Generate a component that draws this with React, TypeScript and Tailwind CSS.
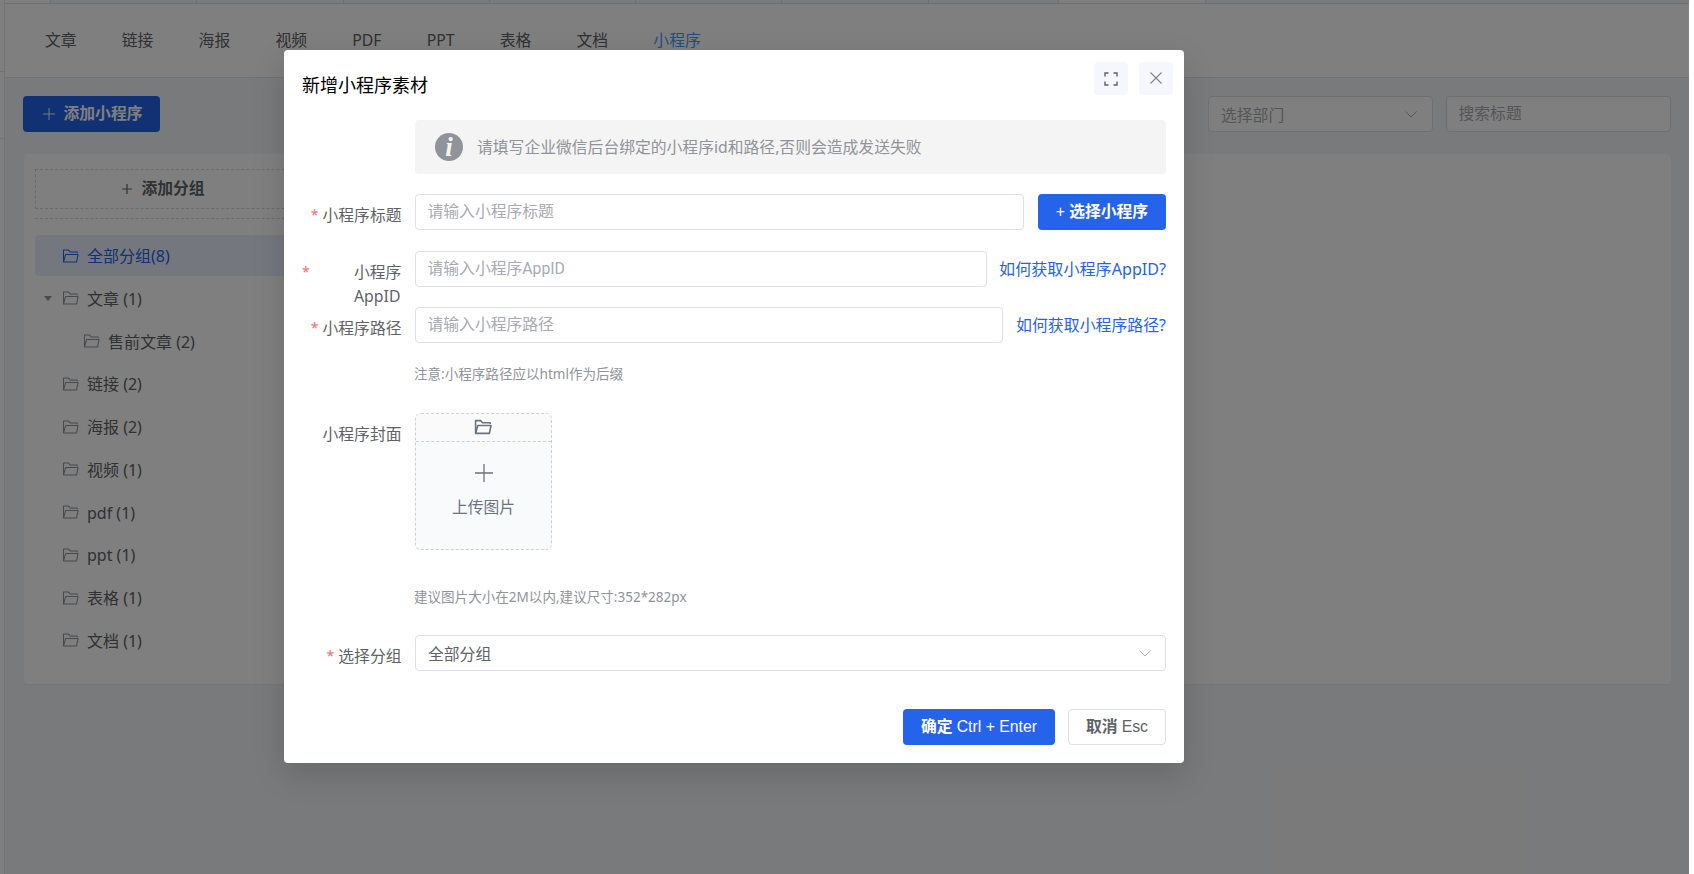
import type { ReactNode } from 'react'

const tabs = ['文章', '链接', '海报', '视频', 'PDF', 'PPT', '表格', '文档', '小程序']

const groups = [
  { name: '文章 (1)', expandable: true },
  { name: '售前文章 (2)', child: true },
  { name: '链接 (2)' },
  { name: '海报 (2)' },
  { name: '视频 (1)' },
  { name: 'pdf (1)' },
  { name: 'ppt (1)' },
  { name: '表格 (1)' },
  { name: '文档 (1)' },
]

const windowTabs = [
  { id: 1, cls: 'w-[46px] bg-white' },
  { id: 2, cls: 'w-[146px]' },
  { id: 3, cls: 'w-[147px]' },
  { id: 4, cls: 'w-[146px]' },
  { id: 5, cls: 'w-[146px]' },
  { id: 6, cls: 'w-[146px]' },
  { id: 7, cls: 'w-[147px]' },
  { id: 8, cls: 'w-[130px]' },
  { id: 9, cls: 'w-[147px] bg-white' },
]

function FolderIcon({ className, thick }: { className?: string; thick?: boolean }) {
  return (
    <svg viewBox="0 0 18 16" className={className} fill="none" stroke="currentColor" strokeWidth={thick ? 1.6 : 1.1} strokeLinejoin="round">
      <path d="M1.6 14.4V1.6h5l2 2.1h7.6v1.4" />
      <path d="M1.6 14.4l2.2-7.9h13.2l-1.6 7.9z" />
    </svg>
  )
}

function PlusIcon({ className, width = 1 }: { className?: string; width?: number }) {
  return (
    <svg viewBox="0 0 18 18" className={className} fill="none" stroke="currentColor" strokeWidth={width}>
      <path d="M9 0v18M0 9h18" />
    </svg>
  )
}

function Chevron({ className }: { className?: string }) {
  return (
    <svg viewBox="0 0 12 7" className={className} fill="none" stroke="currentColor" strokeWidth="1">
      <path d="M.4.5L6 6l5.600-5.500" />
    </svg>
  )
}

function Label({ children, required }: { children: ReactNode; required?: boolean }) {
  return (
    <div className="flex w-[113px] shrink-0 justify-end pr-[13.500px] pt-[9px] leading-6 text-[#606266]">
      {required && <span className="mr-1 text-[14px] text-[#f56c6c]">*</span>}
      <span className="whitespace-nowrap">{children}</span>
    </div>
  )
}

function TextInput({ placeholder, className }: { placeholder: string; className: string }) {
  return (
    <input
      placeholder={placeholder}
      className={`h-9 rounded border border-[#dcdfe6] bg-white pr-3 pb-px pl-[11.500px] font-[Roboto,'Noto_Sans_CJK_SC',sans-serif] outline-none placeholder:text-[#a8abb2] ${className}`}
    />
  )
}

function AddDialog() {
  return (
    <div className="h-[713px] w-[900px] rounded-[4px] bg-white px-[18px] shadow-[0_12px_32px_0_rgba(0,0,0,0.15)]">
      <div className="flex h-[70px] justify-between pt-3">
        <h2 className="pt-[9px] text-[18px] leading-7 text-black">新增小程序素材</h2>
        <div className="-mr-[7px] flex gap-[11px]">
          <button className="flex h-[33px] w-[34px] items-center justify-center rounded bg-[#f5f7fc] pr-px text-[#606266]">
            <svg viewBox="0 0 14 14" className="size-[14px]" fill="none" stroke="currentColor" strokeWidth="1.4">
              <path d="M1 4.500V1h3.500M9.500 1H13v3.500M13 9.500V13H9.500M4.500 13H1V9.500" />
            </svg>
          </button>
          <button className="flex h-[33px] w-[34px] items-center justify-center rounded bg-[#f5f7fc] pb-px text-[#808389]">
            <svg viewBox="0 0 12 12" className="size-3" fill="none" stroke="currentColor" strokeWidth="1.1">
              <path d="M.5.5l11 11M11.500.5l-11 11" />
            </svg>
          </button>
        </div>
      </div>

      <div className="ml-[113px] flex h-[54px] items-center rounded bg-[#f4f4f4] pl-5 text-[#909399]">
        <span className="mr-[14px] flex size-7 items-center justify-center rounded-full bg-[#909399] font-['Liberation_Serif',serif] text-[27px] leading-none font-bold text-[#f4f4f4] italic">i</span>
        <span className="pt-0.5">请填写企业微信后台绑定的小程序id和路径,否则会造成发送失败</span>
      </div>

      <div className="mt-5 flex">
        <Label required>小程序标题</Label>
        <TextInput placeholder="请输入小程序标题" className="w-[609px]" />
        <button className="ml-[14px] h-9 w-32 rounded bg-[#2563eb] pb-px font-bold text-white">
          <span className="font-['Liberation_Sans',sans-serif] font-normal">+</span> 选择小程序
        </button>
      </div>

      <div className="mt-[21px] flex h-9">
        <div className="flex w-[113px] shrink-0 justify-between pr-[13px] pt-[9px] leading-6 text-[#606266]">
          <span className="text-[14px] text-[#f56c6c]">*</span>
          <span className="w-12 whitespace-nowrap">
            小程序
            <br />
            AppID
          </span>
        </div>
        <TextInput placeholder="请输入小程序AppID" className="w-[572px]" />
        <a className="ml-auto text-[16.100px] leading-9 whitespace-nowrap text-[#2563eb]">如何获取小程序AppID?</a>
      </div>

      <div className="mt-5 flex">
        <Label required>小程序路径</Label>
        <TextInput placeholder="请输入小程序路径" className="w-[588px]" />
        <a className="ml-auto text-[15.900px] leading-9 whitespace-nowrap text-[#2563eb]">如何获取小程序路径?</a>
      </div>
      <p className="mt-5 ml-[112px] text-[13.550px] leading-[22px] text-[#909399]">注意:小程序路径应以html作为后缀</p>

      <div className="mt-7 flex">
        <Label>小程序封面</Label>
        <div className="flex size-[137px] flex-col overflow-hidden rounded-md border border-dashed border-[#cdd0d6] bg-[#f9fafc] text-[#6b7280]">
          <div className="flex h-[28px] shrink-0 items-center justify-center border-b border-dashed border-[#cdd0d6] bg-[#fafafa] pr-px pb-px">
            <FolderIcon thick className="h-4 w-[18px]" />
          </div>
          <div className="flex flex-col items-center pt-[22px]">
            <PlusIcon className="size-[18px]" width={1.3} />
            <span className="mt-[13px] leading-6">上传图片</span>
          </div>
        </div>
      </div>
      <p className="mt-9 ml-[112px] text-[13.550px] leading-[22px] text-[#909399]">建议图片大小在2M以内,建议尺寸:352*282px</p>

      <div className="mt-[27px] flex">
        <Label required>选择分组</Label>
        <div className="flex h-9 flex-1 items-center justify-between rounded border border-[#dcdfe6] pr-[14px] pl-3 text-[#606266]">
          <span className="pt-1">全部分组</span>
          <Chevron className="h-[7px] w-3 text-[#a8abb2]" />
        </div>
      </div>

      <div className="mt-[38px] flex justify-end gap-[13px]">
        <button className="h-9 w-[152px] rounded bg-[#2563eb] pb-px text-white">
          <b>确定</b> <span className="font-['Liberation_Sans',sans-serif]">Ctrl + Enter</span>
        </button>
        <button className="h-9 w-[98px] rounded border border-[#dcdfe6] pb-px text-[#606266]">
          <b>取消</b> <span className="font-['Liberation_Sans',sans-serif]">Esc</span>
        </button>
      </div>
    </div>
  )
}

export default function App() {
  return (
    <div className="relative h-[874px] w-[1694px] overflow-hidden bg-white font-['Noto_Sans','Noto_Sans_CJK_SC',sans-serif] text-[15.800px]">
      <div className="flex h-full w-[1689px]">
        <aside className="w-[5px] shrink-0 border-r border-[#e4e7ed] bg-white">
          <div className="h-[72px] border-b border-[#e4e7ed]" />
          <div className="h-[67px] border-b border-[#e4e7ed]" />
        </aside>

        <div className="flex min-w-0 flex-1 flex-col bg-[#f3f4f6]">
          <div className="flex h-1 shrink-0 border-b border-[#dcdfe6]">
            {windowTabs.map(t => (
              <div key={t.id} className={`shrink-0 border-r border-[#dcdfe6] ${t.cls}`} />
            ))}
          </div>

          <nav className="flex h-[74px] shrink-0 items-center gap-[45.200px] border-b border-[#e0e2e6] bg-white pt-px pl-10 text-[#606266]">
            {tabs.map(tab => (
              <span key={tab} className={tab === '小程序' ? 'text-[#409eff]' : ''}>
                {tab}
              </span>
            ))}
          </nav>

          <div className="flex px-[18px] pt-[18px]">
            <button className="flex h-9 w-[137px] items-center justify-center gap-[9px] rounded bg-[#2563eb] pl-0.5 font-bold text-white">
              <PlusIcon className="size-3" width={1.4} />
              <span className="-mt-px">添加小程序</span>
            </button>
            <div className="ml-auto flex h-9 w-[225px] items-center justify-between rounded border border-[#dcdfe6] bg-white pr-[15px] pl-3 text-[#a8abb2]">
              <span className="pt-1">选择部门</span>
              <Chevron className="h-[7px] w-3" />
            </div>
            <TextInput placeholder="搜索标题" className="ml-[13px] w-[225px]" />
          </div>

          <div className="mt-[22px] mr-[18px] ml-[19px] h-[530px] shrink-0 rounded bg-white px-[11px] pt-[15px] shadow-[0_1px_2px_rgba(0,0,0,0.04)]">
            <div className="w-[300px]">
              <div className="flex h-10 items-center justify-center gap-[9px] border border-dashed border-[#d4d7de] pr-[43px] font-bold text-[#606266]">
                <PlusIcon className="size-[10px]" width={2.2} />
                <span>添加分组</span>
              </div>
              <div className="mt-[9px] border-t border-dashed border-[#d4d7de]" />
              <div className="mt-4 flex h-[41px] items-center rounded bg-[#e9effd] pl-[27px] text-[16px] text-[#2563eb]">
                <FolderIcon className="mr-2 h-4 w-[17px]" />
                <span className="pt-px">全部分组(8)</span>
              </div>
              <div className="pt-px">
                {groups.map(g => (
                  <div key={g.name} className={`flex h-[42.750px] items-center text-[16px] text-[#606266] ${g.child ? 'pl-12' : 'pl-[9px]'}`}>
                    {!g.child && (
                      <span className="w-[18px]">
                        {g.expandable && (
                          <svg viewBox="0 0 8 5" className="h-[5px] w-2 fill-[#909399]">
                            <path d="M0 0h8L4 5z" />
                          </svg>
                        )}
                      </span>
                    )}
                    <FolderIcon className="mr-2 h-4 w-[17px] text-[#909399]" />
                    <span className="pt-px">{g.name}</span>
                  </div>
                ))}
              </div>
            </div>
          </div>
        </div>
      </div>

      <div className="absolute inset-y-0 left-0 flex w-[1689px] items-start bg-black/50 pt-[50px] pl-[284px]">
        <AddDialog />
      </div>
    </div>
  )
}
